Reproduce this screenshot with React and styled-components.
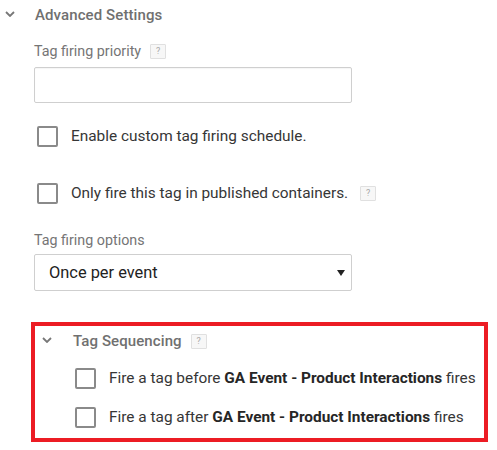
import styled, { createGlobalStyle } from "styled-components";

const Global = createGlobalStyle`
  body {
    margin: 0;
    background: #fff;
    font-family: Roboto, "Liberation Sans", Arial, sans-serif;
  }
`;

const Page = styled.div`
  width: 497px;
  height: 450px;
  background: #fff;
  overflow: hidden;
`;

const SectionHead = styled.div`
  display: flex;
  align-items: center;
  height: 30px;
  padding-left: ${(p) => p.$indent}px;
`;

const Chevron = styled.svg`
  width: 10px;
  height: 6px;
  flex: none;
  margin-right: ${(p) => p.$gap}px;
  margin-top: -3px;
`;

const HeadTitle = styled.span`
  font-size: 15px;
  color: #707070;
  font-weight: 500;
  letter-spacing: 0.1px;
`;

const Body = styled.div`
  padding-left: 34px;
  width: 318px;
`;

const Label = styled.div`
  display: flex;
  align-items: center;
  height: 20px;
  margin-top: ${(p) => p.$top}px;
  font-size: 14.3px;
  color: #757575;
`;

const Help = styled.span`
  display: inline-flex;
  align-items: center;
  justify-content: center;
  width: 14px;
  height: 13px;
  margin-left: ${(p) => p.$gap || 9}px;
  border: 1px solid #e0e0e0;
  background: #f7f7f7;
  color: #a8a8a8;
  font-size: 9px;
  border-radius: 1px;
  flex: none;
`;

const TextInput = styled.div`
  box-sizing: border-box;
  width: 318px;
  height: 36px;
  margin-top: 6px;
  border: 1px solid #cfcfcf;
  border-radius: 2px;
  box-shadow: inset 0 1px 1px rgba(0, 0, 0, 0.04);
`;

const CheckRow = styled.div`
  display: flex;
  align-items: center;
  height: 20px;
  margin-top: ${(p) => p.$top}px;
  margin-left: ${(p) => p.$left}px;
  white-space: nowrap;
`;

const Box = styled.span`
  box-sizing: border-box;
  width: 21px;
  height: 21px;
  border: 2px solid #8a8a8a;
  border-radius: 2px;
  flex: none;
  margin-right: 13px;
`;

const CheckText = styled.span`
  font-size: 15.4px;
  color: #363636;

  b {
    font-weight: 700;
    color: #262626;
  }
`;

const Select = styled.div`
  box-sizing: border-box;
  width: 318px;
  height: 37px;
  margin-top: 4px;
  border: 1px solid #cfcfcf;
  border-radius: 2px;
  display: flex;
  align-items: center;
  justify-content: space-between;
  padding: 0 6px 0 14px;
  font-size: 16.4px;
  color: #222;
`;

const Arrow = styled.svg`
  width: 8px;
  height: 6px;
`;

const Highlight = styled.div`
  box-sizing: border-box;
  margin: 31px 0 0 31px;
  width: 457px;
  height: 120px;
  border: 4px solid #ec1c24;
`;

const chevron = (
  <path d="M1 1 L5 5 L9 1" fill="none" stroke="#777" strokeWidth="1.8" />
);

export default function App() {
  return (
    <Page>
      <Global />
      <SectionHead $indent={5}>
        <Chevron $gap={20} viewBox="0 0 10 6">{chevron}</Chevron>
        <HeadTitle>Advanced Settings</HeadTitle>
      </SectionHead>
      <Body>
        <Label $top={11}>
          Tag firing priority
          <Help>?</Help>
        </Label>
        <TextInput />
        <CheckRow $top={23} $left={3}>
          <Box />
          <CheckText>Enable custom tag firing schedule.</CheckText>
        </CheckRow>
        <CheckRow $top={37} $left={3}>
          <Box />
          <CheckText>Only fire this tag in published containers.</CheckText>
          <Help $gap={12}>?</Help>
        </CheckRow>
        <Label $top={27}>Tag firing options</Label>
        <Select>
          Once per event
          <Arrow viewBox="0 0 8 6">
            <polygon points="0,0 8,0 4,6" fill="#222" />
          </Arrow>
        </Select>
      </Body>
      <Highlight>
        <SectionHead $indent={7}>
          <Chevron $gap={21} viewBox="0 0 10 6">{chevron}</Chevron>
          <HeadTitle>Tag Sequencing</HeadTitle>
          <Help>?</Help>
        </SectionHead>
        <CheckRow $top={12} $left={40}>
          <Box />
          <CheckText>
            Fire a tag before <b>GA Event - Product Interactions</b> fires
          </CheckText>
        </CheckRow>
        <CheckRow $top={19} $left={40}>
          <Box />
          <CheckText>
            Fire a tag after <b>GA Event - Product Interactions</b> fires
          </CheckText>
        </CheckRow>
      </Highlight>
    </Page>
  );
}
